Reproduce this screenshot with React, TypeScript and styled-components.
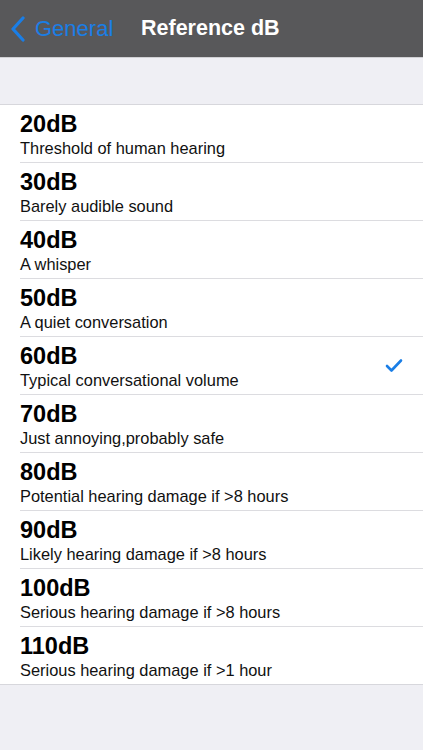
import React, { FC } from 'react';
import styled, { createGlobalStyle } from 'styled-components';

const GlobalStyle = createGlobalStyle`
  html, body {
    margin: 0;
    padding: 0;
    background: #efeff4;
    font-family: "Liberation Sans", Arial, sans-serif;
  }
`;

const Page = styled.div`
  width: 423px;
  height: 750px;
  background: #efeff4;
  display: flex;
  flex-direction: column;
`;

const NavBar = styled.div`
  height: 58px;
  background: #58585a;
  display: flex;
  align-items: center;
  padding: 0 10px;
  box-sizing: border-box;
  border-bottom: 1px solid #d0d0d4;
`;

const BackButton = styled.div`
  display: flex;
  align-items: center;
  gap: 9px;
  color: #1a7ee6;
  font-size: 22px;
  width: 131px;
`;

const Title = styled.div`
  color: #ffffff;
  font-size: 21.5px;
  font-weight: bold;
`;

const Spacer = styled.div`
  height: 46px;
`;

const List = styled.div`
  background: #ffffff;
  border-top: 1px solid #d7d7dc;
  border-bottom: 1px solid #d7d7dc;
  padding-left: 20px;
`;

const Row = styled.div<{ last?: boolean }>`
  height: 57px;
  display: flex;
  align-items: center;
  justify-content: space-between;
  padding-right: 20px;
  border-bottom: ${(p) => (p.last ? 'none' : '1px solid #dcdce0')};
`;

const Text = styled.div`
  display: flex;
  flex-direction: column;
  gap: 2px;
  padding-top: 2px;
`;

const Level = styled.div`
  font-size: 23.5px;
  font-weight: bold;
  color: #000;
  line-height: 26px;
`;

const Description = styled.div`
  font-size: 16.4px;
  color: #111;
  line-height: 19px;
`;

const Chevron = () => (
  <svg width="16" height="26" viewBox="0 0 16 26">
    <path d="M13 2 L3 13 L13 24" fill="none" stroke="#1a7ee6" strokeWidth="3.2" strokeLinecap="round" strokeLinejoin="round" />
  </svg>
);

const Check = () => (
  <svg width="18" height="15" viewBox="0 0 18 15">
    <path d="M2 8 L6.5 12.5 L16 2.5" fill="none" stroke="#1a7ee6" strokeWidth="2.6" strokeLinecap="round" strokeLinejoin="round" />
  </svg>
);

const levels = [
  { db: '20dB', text: 'Threshold of human hearing' },
  { db: '30dB', text: 'Barely audible sound' },
  { db: '40dB', text: 'A whisper' },
  { db: '50dB', text: 'A quiet conversation' },
  { db: '60dB', text: 'Typical conversational volume', selected: true },
  { db: '70dB', text: 'Just annoying,probably safe' },
  { db: '80dB', text: 'Potential hearing damage if >8 hours' },
  { db: '90dB', text: 'Likely hearing damage if >8 hours' },
  { db: '100dB', text: 'Serious hearing damage if >8 hours' },
  { db: '110dB', text: 'Serious hearing damage if >1 hour' }
];

const App: FC = () => (
  <>
    <GlobalStyle />
    <Page>
      <NavBar>
        <BackButton>
          <Chevron />
          General
        </BackButton>
        <Title>Reference dB</Title>
      </NavBar>
      <Spacer />
      <List>
        {levels.map((item, index) => (
          <Row key={item.db} last={index === levels.length - 1}>
            <Text>
              <Level>{item.db}</Level>
              <Description>{item.text}</Description>
            </Text>
            {item.selected && <Check />}
          </Row>
        ))}
      </List>
    </Page>
  </>
);

export default App;
